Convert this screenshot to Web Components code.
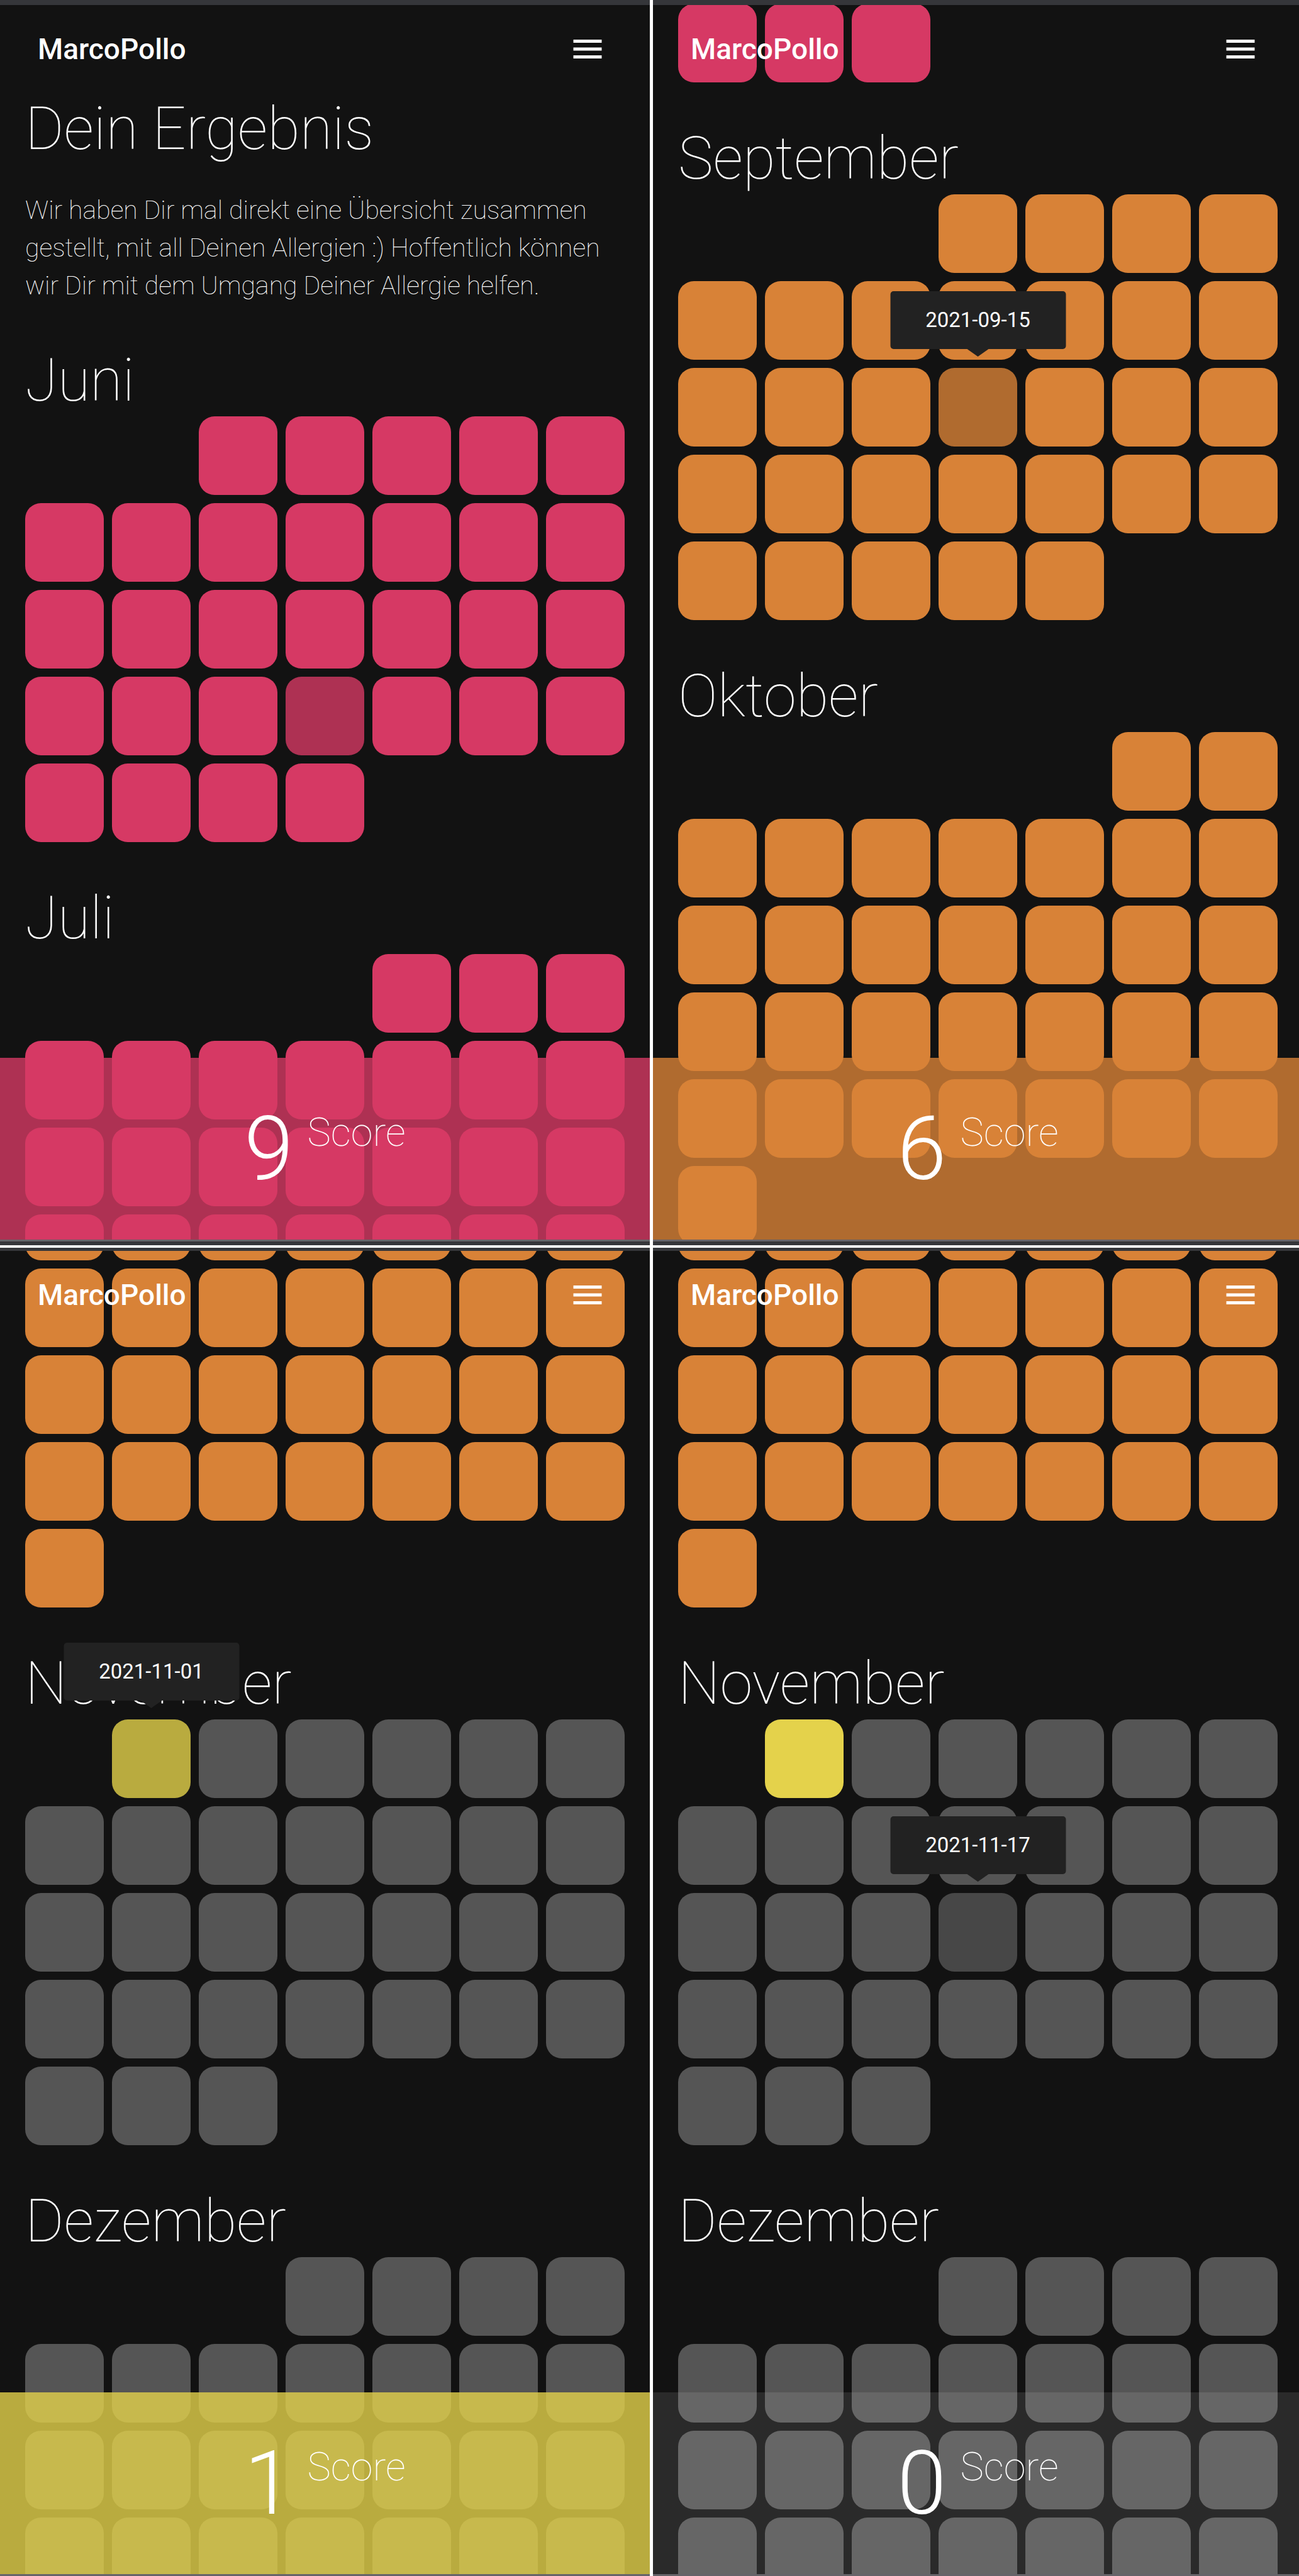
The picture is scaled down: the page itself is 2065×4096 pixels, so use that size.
<!DOCTYPE html>
<html lang="de">
<head>
<meta charset="utf-8">
<meta name="viewport" content="width=device-width, initial-scale=1">
<title>MarcoPollo – Dein Ergebnis</title>
<style>
  html, body { margin: 0; height: 100%; }
  body { background: #fff; color: #fff; font-family: Roboto, "Liberation Sans", sans-serif; }
</style>
</head>
<body>
<screen-board>
  <phone-screen>
    <intro-text heading="Dein Ergebnis">Wir haben Dir mal direkt eine Übersicht zusammen gestellt, mit all Deinen Allergien :) Hoffentlich können wir Dir mit dem Umgang Deiner Allergie helfen.</intro-text>
    <month-grid name="Juni" start="2" days="30" level="high" active="23"></month-grid>
    <month-grid name="Juli" start="4" days="31" level="high"></month-grid>
    <score-bar slot="score" value="9" level="high"></score-bar>
  </phone-screen>
  <phone-screen cut scroll="august">
    <month-grid start="0" days="3" level="high"></month-grid>
    <month-grid name="September" start="3" days="30" level="mid" active="15" tip="2021-09-15"></month-grid>
    <month-grid name="Oktober" start="5" days="31" level="mid"></month-grid>
    <score-bar slot="score" value="6" level="mid"></score-bar>
  </phone-screen>
  <phone-screen short scroll="oktober">
    <month-grid start="5" days="31" level="mid"></month-grid>
    <month-grid name="November" start="1" days="30" level="none" first="low" active="1" tip="2021-11-01"></month-grid>
    <month-grid name="Dezember" start="3" days="31" level="none"></month-grid>
    <score-bar slot="score" value="1" level="low"></score-bar>
  </phone-screen>
  <phone-screen short cut scroll="oktober">
    <month-grid start="5" days="31" level="mid"></month-grid>
    <month-grid name="November" start="1" days="30" level="none" first="low" active="17" tip="2021-11-17"></month-grid>
    <month-grid name="Dezember" start="3" days="31" level="none"></month-grid>
    <score-bar slot="score" value="0" level="none"></score-bar>
  </phone-screen>
</screen-board>

<script>
const levels = `
  .high { --level: #d63964; --bar: rgba(214, 57, 100, .8); }
  .mid  { --level: #d88237; --bar: rgba(216, 130, 55, .8); }
  .low  { --level: #e4d24b; --bar: rgba(228, 210, 75, .8); }
  .none { --level: #555555; --bar: rgba(255, 255, 255, .1); }
`;

class ScreenBoard extends HTMLElement {
  constructor() {
    super();
    this.attachShadow({ mode: 'open' }).innerHTML = `
      <style>
        :host {
          display: grid;
          height: 100vh;
          grid-template-columns: minmax(0, 1033fr) minmax(0, 1027fr);
          grid-template-rows: minmax(0, 1980fr) minmax(0, 2112fr);
          column-gap: 5px;
          row-gap: 4px;
        }
      </style>
      <slot></slot>`;
  }
}

class PhoneScreen extends HTMLElement {
  constructor() {
    super();
    this.attachShadow({ mode: 'open' }).innerHTML = `
      <style>
        :host {
          --extra: 0px;
          --scroll: 0px;
          display: flex;
          flex-direction: column;
          overflow: hidden;
          background: #121212;
        }
        :host([cut]) { --extra: 6px; }
        :host([scroll="august"]) { --scroll: 2px; }
        :host([scroll="oktober"]) { --scroll: 248px; }
        .edge { flex: none; height: 8px; background: #35363a; }
        .edge.bottom { height: 6px; border-top: 3px solid #666469; }
        :host([short]) .edge { height: 5px; }
        :host([short]) .edge.bottom { height: 0; }
        .view {
          position: relative;
          flex: 1;
          min-height: 0;
          width: calc(100% + var(--extra));
          overflow: hidden;
        }
        .content { padding: 0 40px; margin-top: calc(-1 * var(--scroll)); }
        .score { position: absolute; left: 0; right: 0; bottom: 0; z-index: 2; }
        app-header { position: absolute; left: 0; right: 0; top: 0; z-index: 2; }
      </style>
      <div class="edge"></div>
      <div class="view">
        <main class="content"><slot></slot></main>
        <app-header></app-header>
        <div class="score"><slot name="score"></slot></div>
      </div>
      <div class="edge bottom"></div>`;
  }
}

class AppHeader extends HTMLElement {
  constructor() {
    super();
    this.attachShadow({ mode: 'open' }).innerHTML = `
      <style>
        :host {
          display: flex;
          align-items: center;
          justify-content: space-between;
          box-sizing: border-box;
          height: 140px;
          padding: 0 69px 0 60px;
        }
        a { color: #fff; text-decoration: none; font-size: 46px; font-weight: 500; line-height: 60px; }
        button { display: block; padding: 0; border: 0; background: none; color: #fff; }
        svg { display: block; width: 60px; height: 60px; fill: currentColor; }
      </style>
      <a href="#">MarcoPollo</a>
      <button type="button" aria-label="Menü">
        <svg viewBox="0 0 24 24" aria-hidden="true"><path d="M3 6H21V8H3V6ZM3 11H21V13H3V11ZM3 16H21V18H3V16Z"/></svg>
      </button>`;
  }
}

class IntroText extends HTMLElement {
  connectedCallback() {
    this.attachShadow({ mode: 'open' }).innerHTML = `
      <style>
        :host { display: block; padding-top: 149px; }
        h1 { margin: 0 0 51px; font-size: 94px; font-weight: 100; line-height: 96px; }
        p { margin: 0; font-size: 41px; font-weight: 100; line-height: 60px; }
      </style>
      <h1>${this.getAttribute('heading')}</h1>
      <p><slot></slot></p>`;
  }
}

class MonthGrid extends HTMLElement {
  connectedCallback() {
    const get = (name) => this.getAttribute(name);
    const active = Number(get('active'));
    let cells = '';
    for (let day = 1; day <= Number(get('days')); day++) {
      const level = day === 1 && get('first') ? get('first') : get('level');
      const place = day === 1 ? ` style="grid-column-start: ${Number(get('start')) + 1}"` : '';
      const tip = day === active && get('tip') ? `<day-tip>${get('tip')}</day-tip>` : '';
      cells += `<div class="day"${place}><div class="fill ${level}${day === active ? ' active' : ''}"></div>${tip}</div>`;
    }
    this.attachShadow({ mode: 'open' }).innerHTML = `
      <style>
        ${levels}
        :host { display: block; }
        h2 { margin: 0; padding: 73px 0 9px; font-size: 94px; font-weight: 100; line-height: 96px; }
        .days { display: grid; grid-template-columns: repeat(7, minmax(0, 1fr)); gap: 13px; }
        .day { position: relative; aspect-ratio: 1; }
        .fill { height: 100%; border-radius: 25px; background: var(--level); }
        .active { opacity: .8; }
      </style>
      ${get('name') ? `<h2>${get('name')}</h2>` : ''}
      <div class="days">${cells}</div>`;
  }
}

class DayTip extends HTMLElement {
  constructor() {
    super();
    this.attachShadow({ mode: 'open' }).innerHTML = `
      <style>
        :host {
          position: absolute;
          z-index: 1;
          left: 50%;
          bottom: calc(100% + 30px);
          transform: translateX(-50%);
          box-sizing: border-box;
          width: 279px;
          padding: 20px 0;
          border-radius: 5px;
          background: #222;
          font-size: 33px;
          line-height: 52px;
          text-align: center;
          white-space: nowrap;
        }
        :host::after {
          content: "";
          position: absolute;
          left: 50%;
          top: 100%;
          margin-left: -17px;
          border: 17px solid transparent;
          border-top: 12px solid #222;
          border-bottom: 0;
        }
      </style>
      <slot></slot>`;
  }
}

class ScoreBar extends HTMLElement {
  connectedCallback() {
    this.attachShadow({ mode: 'open' }).innerHTML = `
      <style>
        ${levels}
        :host { display: block; }
        .bar {
          display: flex;
          align-items: center;
          justify-content: center;
          height: 289px;
          background: var(--bar);
        }
        .value { font-size: 141px; font-weight: 300; line-height: 140px; }
        .label { margin-bottom: 52px; padding-left: 22px; font-size: 63px; font-weight: 100; line-height: 90px; }
      </style>
      <div class="bar ${this.getAttribute('level')}">
        <span class="value">${this.getAttribute('value')}</span>
        <span class="label">Score</span>
      </div>`;
  }
}

customElements.define('day-tip', DayTip);
customElements.define('month-grid', MonthGrid);
customElements.define('intro-text', IntroText);
customElements.define('app-header', AppHeader);
customElements.define('score-bar', ScoreBar);
customElements.define('phone-screen', PhoneScreen);
customElements.define('screen-board', ScreenBoard);
</script>
</body>
</html>
